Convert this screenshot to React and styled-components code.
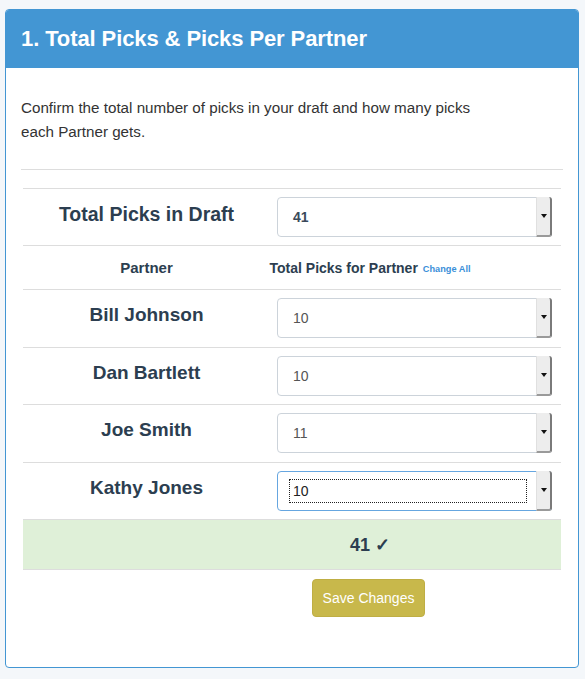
import React from "react";
import styled, { createGlobalStyle } from "styled-components";

const GlobalStyle = createGlobalStyle`
  body {
    margin: 0;
    background: #f4f7fa;
    font-family: "Liberation Sans", Arial, sans-serif;
  }
`;

const Page = styled.div`
  padding: 9px 6px 12px 5px;
`;

const Panel = styled.div`
  background: #fff;
  border: 1px solid #4396d3;
  border-radius: 4px;
  overflow: hidden;
`;

const PanelHeader = styled.div`
  background: #4396d3;
  height: 58px;
  display: flex;
  align-items: center;
  padding: 0 15px;
  color: #fff;
  font-size: 22px;
  font-weight: bold;
  letter-spacing: -0.1px;
`;

const PanelBody = styled.div`
  padding: 28px 15px 50px;
`;

const Intro = styled.p`
  margin: 0;
  max-width: 470px;
  font-size: 15.2px;
  line-height: 24px;
  color: #333;
`;

const Divider = styled.hr`
  border: 0;
  border-top: 1px solid #ddd;
  margin: 25px 0 18px;
`;

const Table = styled.div`
  margin: 0 2px;
  border-top: 1px solid #ddd;
`;

const Row = styled.div`
  display: grid;
  grid-template-columns: 247px 1fr;
  height: ${(p) => p.h}px;
  border-bottom: 1px solid #ddd;
  background: ${(p) => (p.success ? "#dff0d8" : "transparent")};
  box-sizing: border-box;
`;

const NameCell = styled.div`
  text-align: center;
  color: #2c3e50;
  font-weight: bold;
  font-size: ${(p) => p.size}px;
  padding-top: ${(p) => p.top}px;
  line-height: 20px;
`;

const InputCell = styled.div`
  padding: 8px 9px 0 7px;
`;

const CenterCol = styled.div`
  width: 200px;
  height: 100%;
  display: flex;
  align-items: center;
  justify-content: center;
  white-space: nowrap;
  color: #2c3e50;
  font-weight: bold;
  font-size: ${(p) => p.size || 14}px;
`;

const ChangeAll = styled.a`
  color: #3a8fd9;
  font-size: 9.2px;
  margin-left: 5px;
  margin-top: 2px;
  text-decoration: none;
`;

const SelectBox = styled.div`
  position: relative;
  height: 40px;
  box-sizing: border-box;
  border: 1px solid ${(p) => (p.focused ? "#66a6e0" : "#ccd3da")};
  border-radius: 4px;
  display: flex;
  align-items: center;
  padding-left: 12px;
  font-size: 14px;
  color: ${(p) => (p.bold ? "#3a4a5a" : "#555")};
  font-weight: ${(p) => (p.bold ? "bold" : "normal")};
`;

const SelectValue = styled.span`
  display: block;
  width: 230px;
  padding: 3px 3px;
  line-height: 16px;
  outline: ${(p) => (p.focused ? "1px dotted #222" : "none")};
  color: ${(p) => (p.focused ? "#222" : "inherit")};
`;

const SelectArrow = styled.span`
  position: absolute;
  top: -1px;
  right: -1px;
  bottom: -1px;
  width: 16px;
  box-sizing: border-box;
  background: #ededed;
  border-left: 1px solid #e0e0e0;
  border-right: 2px solid #7a7a7a;
  border-bottom: 2px solid #9a9a9a;
  border-radius: 0 3px 3px 0;
  display: flex;
  align-items: center;
  justify-content: center;

  &::after {
    content: "";
    border-left: 3px solid transparent;
    border-right: 3px solid transparent;
    border-top: 4px solid #111;
  }
`;

const Footer = styled.div`
  display: grid;
  grid-template-columns: 247px 1fr;
  padding-top: 9px;
`;

const SaveButton = styled.button`
  grid-column: 2;
  margin-left: 44px;
  width: 113px;
  height: 38px;
  background: #c8b84b;
  border: 1px solid #bfae44;
  border-radius: 4px;
  color: #fff;
  font-family: "Liberation Sans", Arial, sans-serif;
  font-size: 14px;
  cursor: pointer;
`;

const Select = ({ value, bold, focused }) => (
  <SelectBox bold={bold} focused={focused}>
    <SelectValue focused={focused}>{value}</SelectValue>
    <SelectArrow />
  </SelectBox>
);

const partners = [
  { name: "Bill Johnson", picks: 10, h: 58 },
  { name: "Dan Bartlett", picks: 10, h: 57 },
  { name: "Joe Smith", picks: 11, h: 58 },
  { name: "Kathy Jones", picks: 10, h: 57, focused: true },
];

export default function App() {
  return (
    <>
      <GlobalStyle />
      <Page>
        <Panel>
          <PanelHeader>1. Total Picks &amp; Picks Per Partner</PanelHeader>
          <PanelBody>
            <Intro>
              Confirm the total number of picks in your draft and how many picks
              each Partner gets.
            </Intro>
            <Divider />
            <Table>
              <Row h={57}>
                <NameCell size={19.5} top={15}>Total Picks in Draft</NameCell>
                <InputCell>
                  <Select value="41" bold />
                </InputCell>
              </Row>
              <Row h={44}>
                <NameCell size={15} top={12}>Partner</NameCell>
                <div>
                  <CenterCol>
                    Total Picks for Partner <ChangeAll href="#">Change All</ChangeAll>
                  </CenterCol>
                </div>
              </Row>
              {partners.map((p) => (
                <Row h={p.h} key={p.name}>
                  <NameCell size={19} top={15}>{p.name}</NameCell>
                  <InputCell>
                    <Select value={p.picks} focused={p.focused} />
                  </InputCell>
                </Row>
              ))}
              <Row h={50} success>
                <div />
                <div>
                  <CenterCol size={18}>41 ✓</CenterCol>
                </div>
              </Row>
            </Table>
            <Footer>
              <SaveButton>Save Changes</SaveButton>
            </Footer>
          </PanelBody>
        </Panel>
      </Page>
    </>
  );
}
